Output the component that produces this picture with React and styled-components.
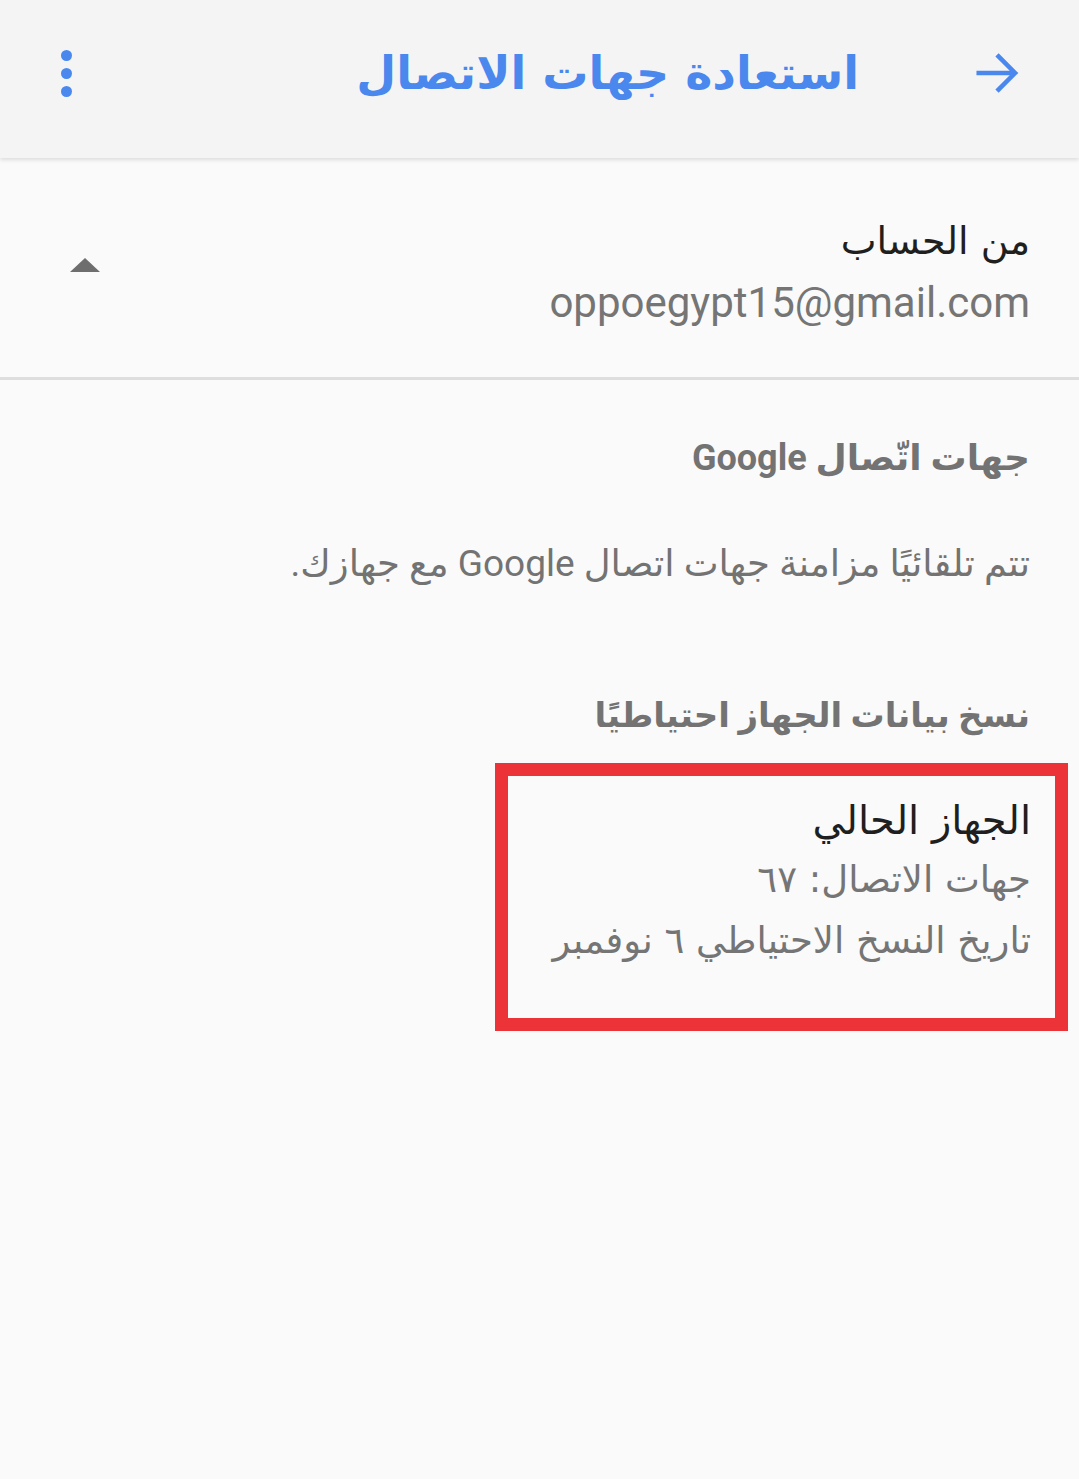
import React from "react";
import styled, { createGlobalStyle } from "styled-components";

const GlobalStyle = createGlobalStyle`
  html, body {
    margin: 0;
    padding: 0;
    background: #fafafa;
  }
  body {
    font-family: Roboto, "DejaVu Sans", sans-serif;
  }
`;

const App = () => {
  return (
    <>
      <GlobalStyle />
      <Screen dir="rtl">
        <Header>
          <BackBtn aria-label="back">
            <svg width="58" height="58" viewBox="0 0 24 24">
              <path
                d="M3.5 12h16M12 4.5l7.5 7.5-7.5 7.5"
                fill="none"
                stroke="#4a88ee"
                strokeWidth="1.9"
              />
            </svg>
          </BackBtn>
          <Title>استعادة جهات الاتصال</Title>
          <MenuBtn aria-label="menu">
            <Dot />
            <Dot />
            <Dot />
          </MenuBtn>
        </Header>

        <AccountRow>
          <AccountText>
            <PrimaryLine>من الحساب</PrimaryLine>
            <Email dir="ltr">oppoegypt15@gmail.com</Email>
          </AccountText>
          <Caret />
        </AccountRow>
        <Divider />

        <Section>
          <SectionTitle>جهات اتّصال Google</SectionTitle>
          <Description>تتم تلقائيًا مزامنة جهات اتصال Google مع جهازك.</Description>
        </Section>

        <Section $top={99}>
          <SectionTitle $size={34}>نسخ بيانات الجهاز احتياطيًا</SectionTitle>
        </Section>

        <CardWrap>
          <Card>
            <PrimaryLine $size={40}>الجهاز الحالي</PrimaryLine>
            <SecondaryLine>جهات الاتصال: ٦٧</SecondaryLine>
            <SecondaryLine>تاريخ النسخ الاحتياطي ٦ نوفمبر</SecondaryLine>
          </Card>
        </CardWrap>
      </Screen>
    </>
  );
};

export default App;

const Screen = styled.div`
  width: 1079px;
  min-height: 1479px;
  background: #fafafa;
  font-family: Roboto, "DejaVu Sans", sans-serif;
`;

const Header = styled.header`
  box-sizing: border-box;
  height: 158px;
  background: #f4f4f4;
  box-shadow: 0 2px 4px rgba(0, 0, 0, 0.12);
  display: flex;
  align-items: center;
  padding: 0 52px 12px 40px;
  position: relative;
`;

const BackBtn = styled.div`
  width: 60px;
  height: 60px;
  display: flex;
  align-items: center;
  justify-content: center;
`;

const Title = styled.h1`
  flex: 1;
  margin: 0;
  padding-right: 108px;
  font-family: "DejaVu Sans", sans-serif;
  font-size: 46px;
  font-weight: 700;
  color: #4a88ee;
  text-align: right;
  line-height: 1;
`;

const MenuBtn = styled.div`
  width: 52px;
  height: 60px;
  display: flex;
  flex-direction: column;
  align-items: center;
  justify-content: center;
  gap: 7px;
`;

const Dot = styled.span`
  width: 11px;
  height: 11px;
  border-radius: 50%;
  background: #4a88ee;
`;

const AccountRow = styled.div`
  display: flex;
  align-items: center;
  justify-content: space-between;
  padding: 55px 49px 50px 70px;
`;

const AccountText = styled.div`
  display: flex;
  flex-direction: column;
  gap: 10px;
`;

const PrimaryLine = styled.div`
  font-family: "DejaVu Sans", sans-serif;
  font-size: ${(p) => p.$size ?? 38}px;
  color: #1f1f1f;
  line-height: 56px;
`;

const Email = styled.div`
  font-family: Roboto, sans-serif;
  font-size: 42px;
  color: #757575;
  line-height: 48px;
  text-align: right;
`;

const Caret = styled.span`
  width: 0;
  height: 0;
  border-left: 15px solid transparent;
  border-right: 15px solid transparent;
  border-bottom: 14px solid #6e6e6e;
  margin-top: -10px;
`;

const Divider = styled.div`
  height: 3px;
  background: #dedede;
`;

const Section = styled.section`
  padding: ${(p) => p.$top ?? 52}px 49px 0 49px;
  display: flex;
  flex-direction: column;
  gap: 54px;
`;

const SectionTitle = styled.h2`
  margin: 0;
  font-family: Roboto, "DejaVu Sans", sans-serif;
  font-size: ${(p) => p.$size ?? 36}px;
  font-weight: 700;
  color: #737373;
  line-height: 52px;
`;

const Description = styled.p`
  margin: 0;
  font-family: Roboto, "DejaVu Sans", sans-serif;
  font-size: 37px;
  color: #737373;
  line-height: 52px;
`;

const CardWrap = styled.div`
  display: flex;
  padding: 22px 11px 0 0;
`;

const Card = styled.div`
  box-sizing: border-box;
  width: 573px;
  height: 268px;
  border: 13px solid #ec3338;
  padding: 16px 24px 0 24px;
  display: flex;
  flex-direction: column;
  gap: 3px;
`;

const SecondaryLine = styled.div`
  font-family: "DejaVu Sans", sans-serif;
  font-size: 37px;
  color: #757575;
  line-height: 58px;
`;
